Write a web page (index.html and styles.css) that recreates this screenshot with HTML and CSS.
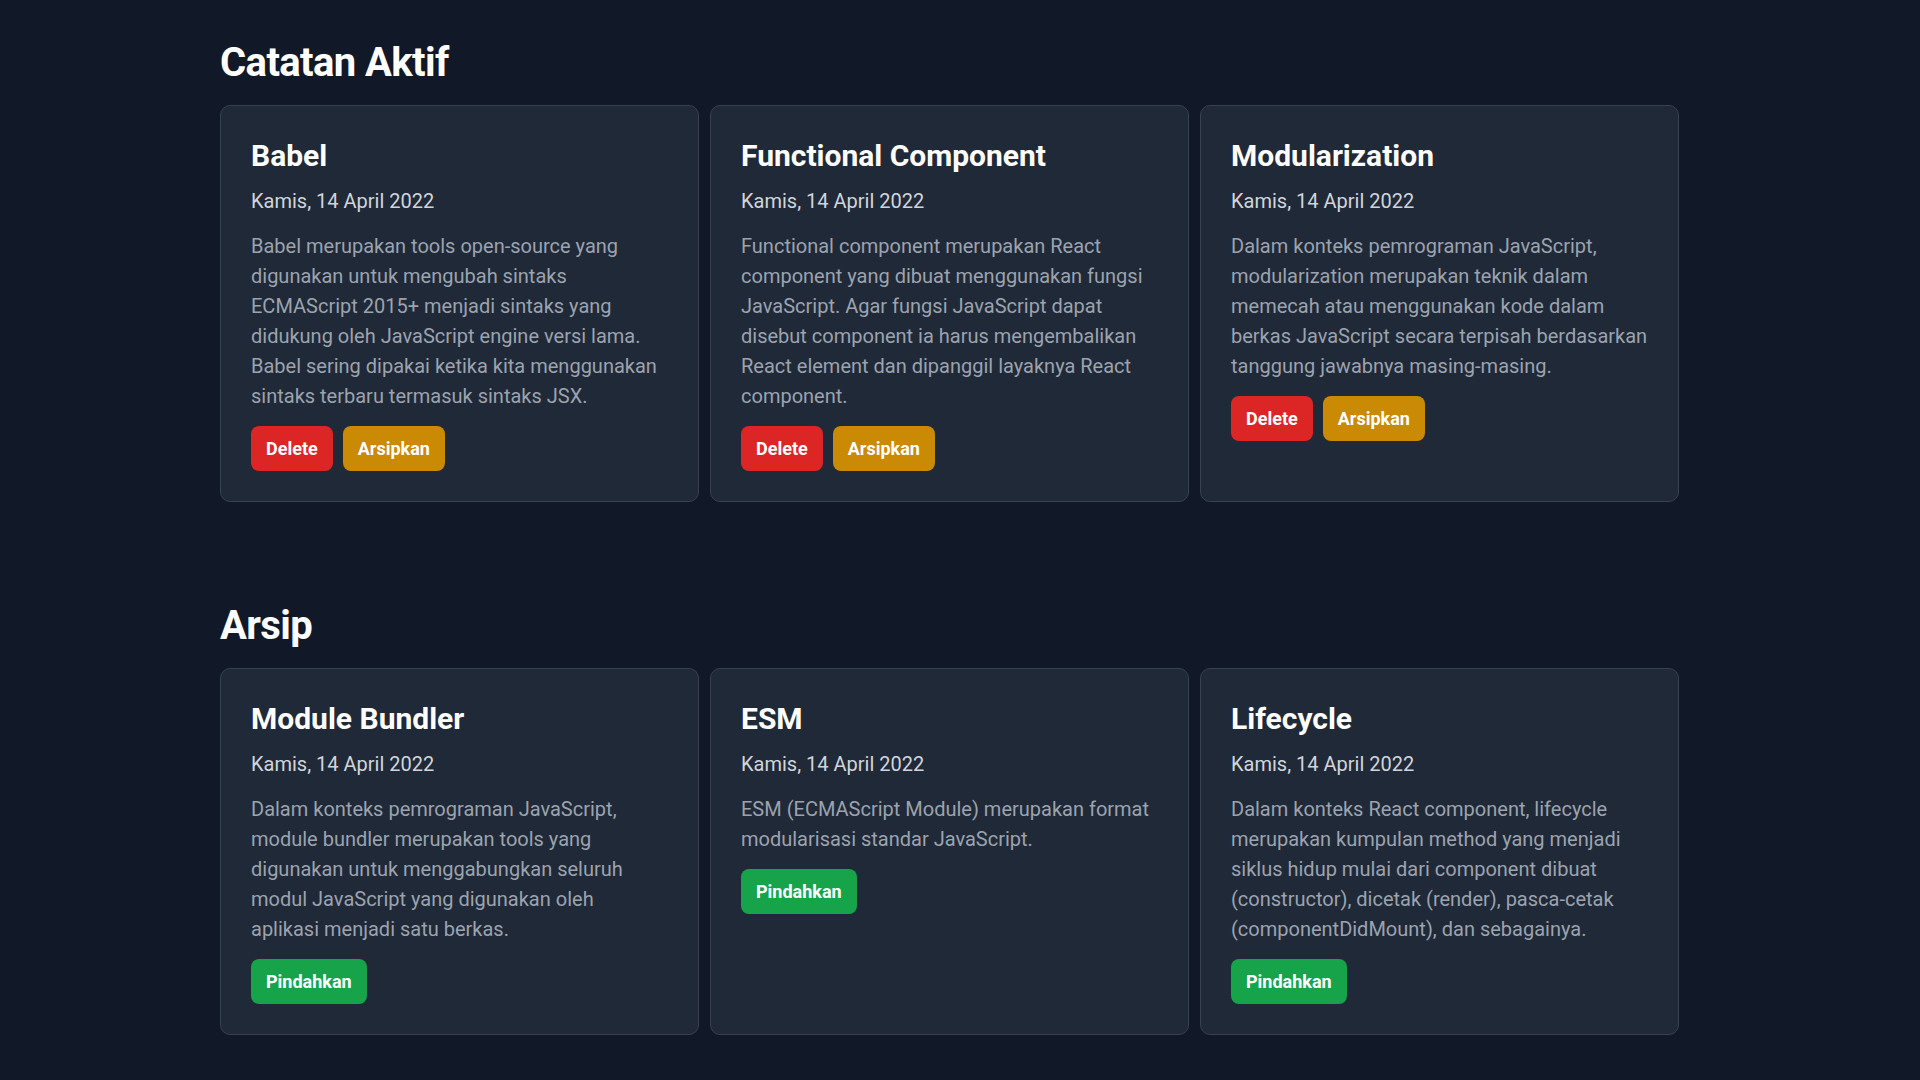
FILE: index.html
```html
<!DOCTYPE html>
<html lang="id">
<head>
<meta charset="utf-8">
<title>Catatan</title>
<link rel="stylesheet" href="styles.css">
</head>
<body>
<main class="page">
  <section class="section">
    <h2 class="section-title">Catatan Aktif</h2>
    <div class="grid">
      <article class="card">
        <h3 class="card-title">Babel</h3>
        <p class="card-date">Kamis, 14 April 2022</p>
        <p class="card-body">Babel merupakan tools open-source yang digunakan untuk mengubah sintaks ECMAScript 2015+ menjadi sintaks yang didukung oleh JavaScript engine versi lama. Babel sering dipakai ketika kita menggunakan sintaks terbaru termasuk sintaks JSX.</p>
        <div class="actions">
          <button class="btn btn-delete">Delete</button>
          <button class="btn btn-archive">Arsipkan</button>
        </div>
      </article>
      <article class="card">
        <h3 class="card-title">Functional Component</h3>
        <p class="card-date">Kamis, 14 April 2022</p>
        <p class="card-body">Functional component merupakan React component yang dibuat menggunakan fungsi JavaScript. Agar fungsi JavaScript dapat disebut component ia harus mengembalikan React element dan dipanggil layaknya React component.</p>
        <div class="actions">
          <button class="btn btn-delete">Delete</button>
          <button class="btn btn-archive">Arsipkan</button>
        </div>
      </article>
      <article class="card">
        <h3 class="card-title">Modularization</h3>
        <p class="card-date">Kamis, 14 April 2022</p>
        <p class="card-body">Dalam konteks pemrograman JavaScript, modularization merupakan teknik dalam memecah atau menggunakan kode dalam berkas JavaScript secara terpisah berdasarkan tanggung jawabnya masing-masing.</p>
        <div class="actions">
          <button class="btn btn-delete">Delete</button>
          <button class="btn btn-archive">Arsipkan</button>
        </div>
      </article>
    </div>
  </section>

  <section class="section">
    <h2 class="section-title">Arsip</h2>
    <div class="grid">
      <article class="card">
        <h3 class="card-title">Module Bundler</h3>
        <p class="card-date">Kamis, 14 April 2022</p>
        <p class="card-body">Dalam konteks pemrograman JavaScript, module bundler merupakan tools yang digunakan untuk menggabungkan seluruh modul JavaScript yang digunakan oleh <span class="nowrap">aplikasi menjadi</span> satu berkas.</p>
        <div class="actions">
          <button class="btn btn-move">Pindahkan</button>
        </div>
      </article>
      <article class="card">
        <h3 class="card-title">ESM</h3>
        <p class="card-date">Kamis, 14 April 2022</p>
        <p class="card-body">ESM (ECMAScript Module) merupakan format modularisasi standar JavaScript.</p>
        <div class="actions">
          <button class="btn btn-move">Pindahkan</button>
        </div>
      </article>
      <article class="card">
        <h3 class="card-title">Lifecycle</h3>
        <p class="card-date">Kamis, 14 April 2022</p>
        <p class="card-body">Dalam konteks React component, lifecycle merupakan kumpulan method yang menjadi siklus hidup mulai dari component dibuat (constructor), dicetak (render), pasca-cetak (componentDidMount), dan sebagainya.</p>
        <div class="actions">
          <button class="btn btn-move">Pindahkan</button>
        </div>
      </article>
    </div>
  </section>
</main>
</body>
</html>
```
FILE: styles.css
```css
html {
  overflow-y: scroll;
  background: #111827;
}

html::-webkit-scrollbar {
  width: 15px;
  background: #f1f1f1;
}

html::-webkit-scrollbar-track {
  background: #f1f1f1;
}

html::-webkit-scrollbar-thumb {
  background: #a8a8a8;
  border: 2px solid #f1f1f1;
}

html::-webkit-scrollbar-button:single-button:vertical {
  display: block;
  height: 17px;
  background-color: #f1f1f1;
  background-repeat: no-repeat;
  background-position: center;
  background-size: 8px 4px;
}

html::-webkit-scrollbar-button:single-button:vertical:decrement {
  background-image: url("data:image/svg+xml;utf8,<svg xmlns='http://www.w3.org/2000/svg' width='8' height='4' viewBox='0 0 8 4'><path d='M4 0L8 4H0Z' fill='%23505050'/></svg>");
}

html::-webkit-scrollbar-button:single-button:vertical:increment {
  background-image: url("data:image/svg+xml;utf8,<svg xmlns='http://www.w3.org/2000/svg' width='8' height='4' viewBox='0 0 8 4'><path d='M0 0H8L4 4Z' fill='%23505050'/></svg>");
}

body {
  margin: 0;
  background: #111827;
  color: #ffffff;
  font-family: Roboto, "Noto Sans", sans-serif;
}

.page {
  padding: 43px 0 46px 220px;
}

.section + .section {
  margin-top: 104px;
}

.section-title {
  margin: 0 0 22px;
  font-size: 40px;
  line-height: 40px;
  font-weight: 700;
  letter-spacing: -0.6px;
  color: #ffffff;
}

.grid {
  display: grid;
  grid-template-columns: repeat(3, 479px);
  column-gap: 11px;
}

.card {
  background: #1f2937;
  border: 1px solid #374151;
  border-radius: 10px;
  padding: 32px 30px 30px 30px;
}

.card-title {
  margin: 0 0 13px;
  font-size: 30px;
  line-height: 36px;
  font-weight: 700;
  color: #ffffff;
}

.card-date {
  margin: 0 0 16px;
  font-size: 20px;
  line-height: 28px;
  color: #d1d5db;
}

.card-body {
  margin: 0 0 15px;
  font-size: 20px;
  line-height: 30px;
  color: #9ca3af;
}

.nowrap {
  white-space: nowrap;
}

.actions {
  display: flex;
  gap: 10px;
}

.btn {
  border: 0;
  border-radius: 8px;
  padding: 8px 15px;
  font-family: Roboto, "Noto Sans", sans-serif;
  font-size: 18px;
  line-height: 29px;
  font-weight: 700;
  color: #ffffff;
  cursor: pointer;
}

.btn-delete {
  background: #dc2626;
}

.btn-archive {
  background: #ca8a04;
}

.btn-move {
  background: #16a34a;
}
```
